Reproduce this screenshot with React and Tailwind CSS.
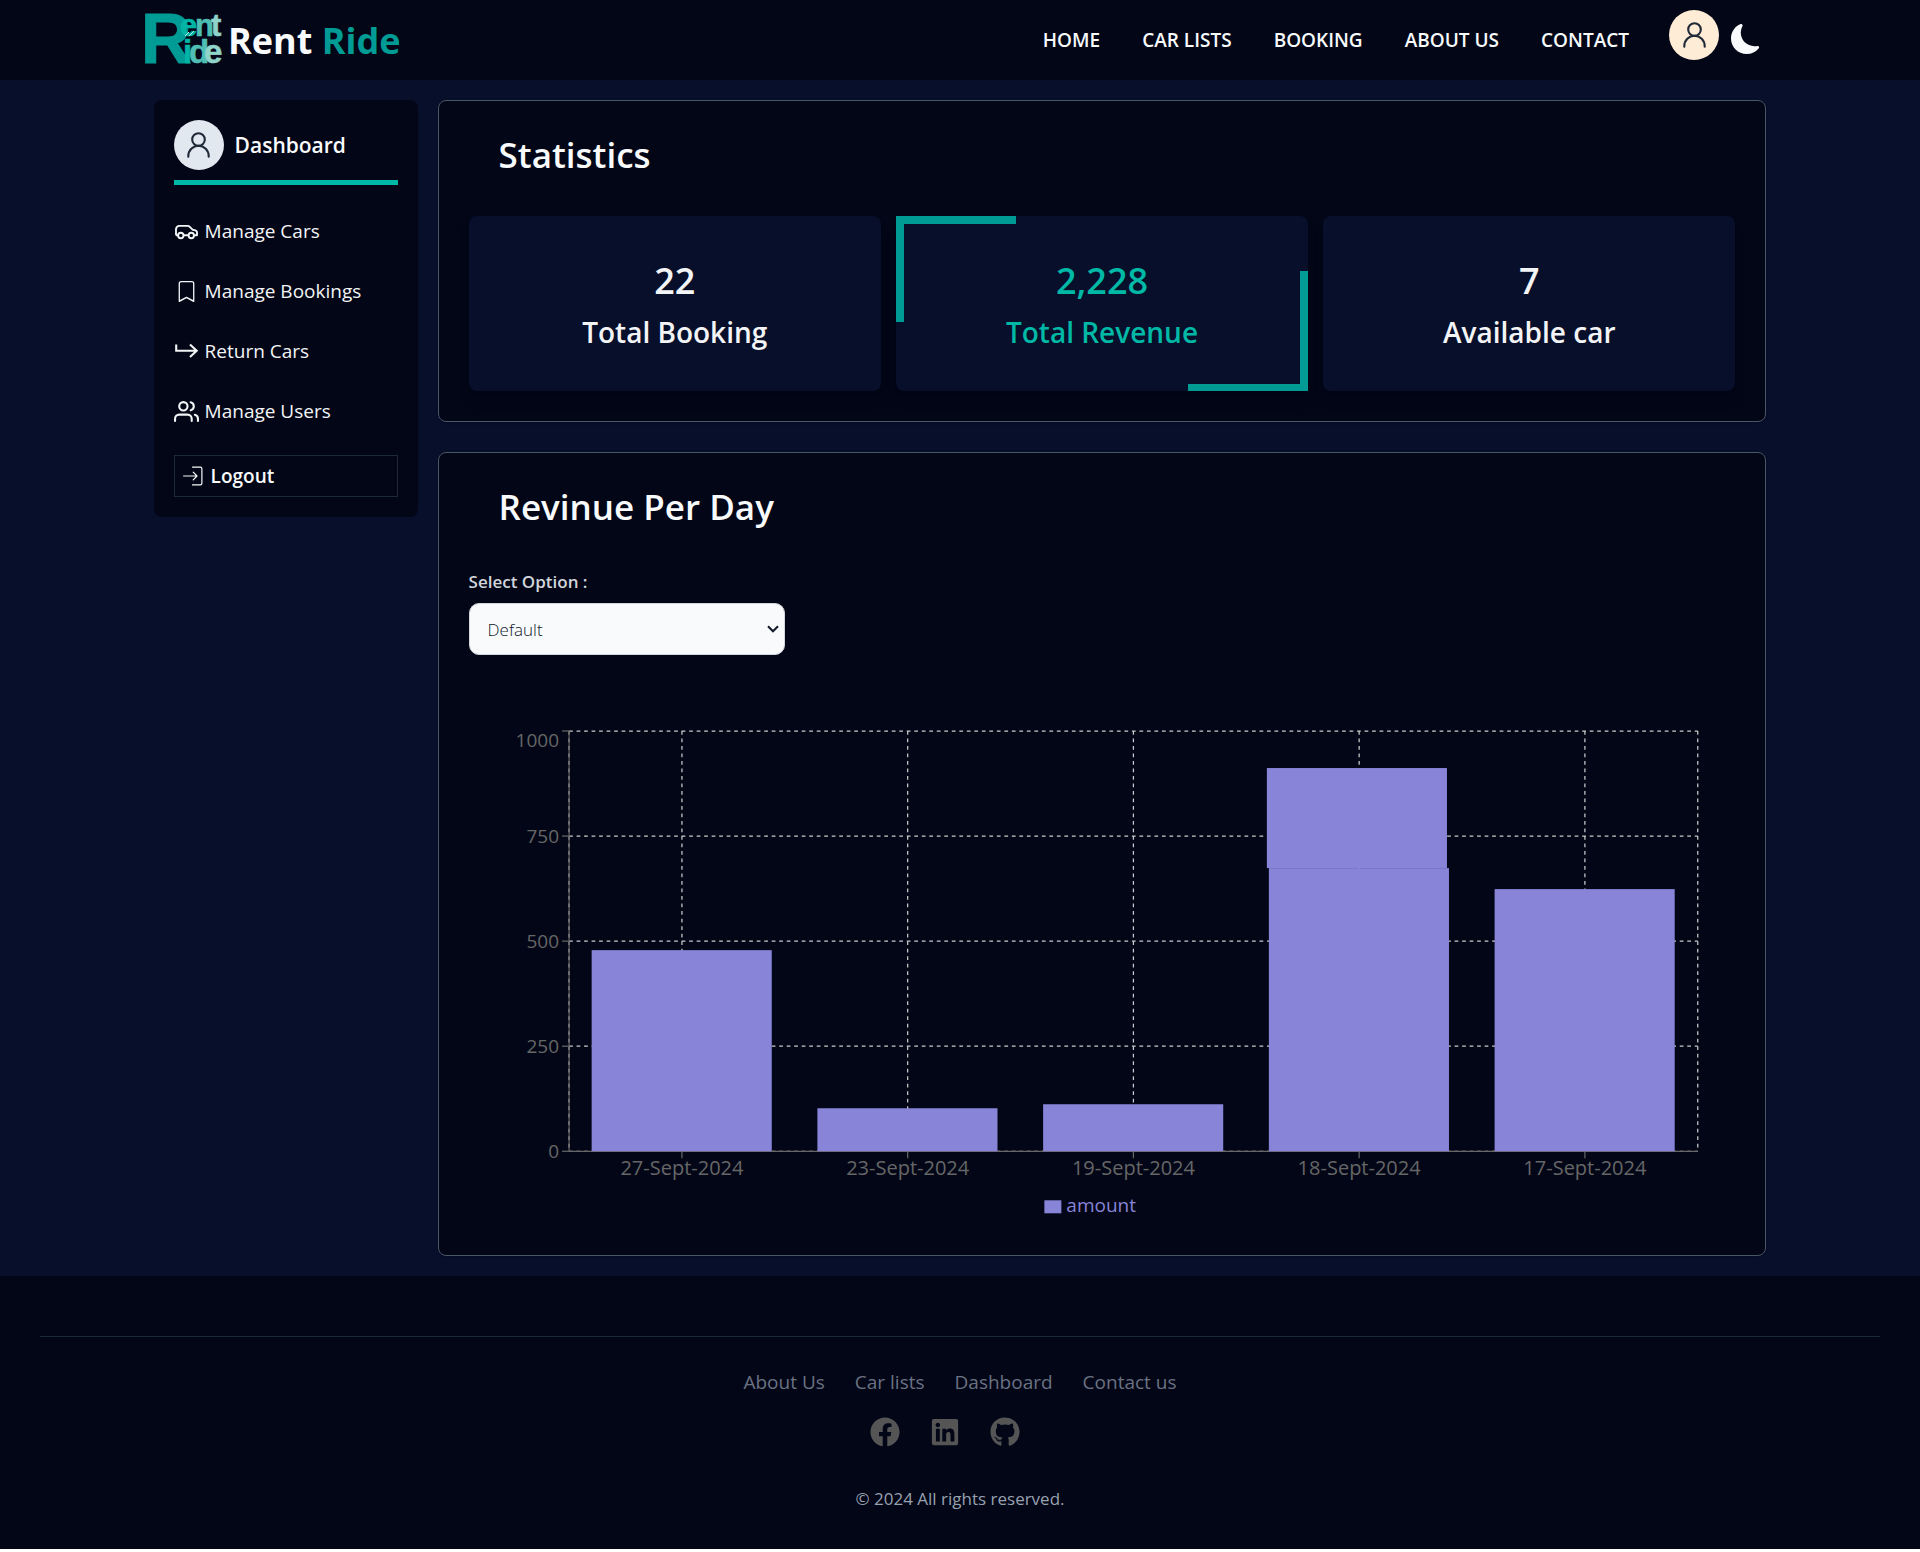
import { BsBookmark, BsMoonFill } from "react-icons/bs";
import { FiUsers } from "react-icons/fi";
import { FaFacebook, FaLinkedin, FaGithub } from "react-icons/fa";

const navItems = ["HOME", "CAR LISTS", "BOOKING", "ABOUT US", "CONTACT"];

function UserIcon() {
  return (
    <svg viewBox="0 0 23 26" className="h-[26px] w-[23px]" fill="none" stroke="currentColor" strokeWidth="2.1" strokeLinecap="round" aria-hidden="true">
      <circle cx="11.5" cy="7.5" r="6.3" />
      <path d="M1.3 24.7v-.5a10.2 10.4 0 0 1 20.4 0v.5" />
    </svg>
  );
}

function CarIcon() {
  return (
    <svg viewBox="0 0 25 25" className="size-[25px]" fill="none" stroke="currentColor" strokeWidth="1.9" strokeLinejoin="round" aria-hidden="true">
      <path d="M4 16.3H2.7L2 15.4V10Q2.6 6.9 5.4 6.9H13.8Q14.8 6.9 15.5 7.6L18.6 10.7Q23 11 23 13.6V16.3H20.2M9.6 16.3H14.4" />
      <circle cx="6.8" cy="16.5" r="2.7" />
      <circle cx="17.3" cy="16.5" r="2.7" />
    </svg>
  );
}

function ReturnIcon() {
  return (
    <svg viewBox="0 0 25 25" className="size-[25px]" fill="none" stroke="currentColor" strokeWidth="2.1" aria-hidden="true">
      <path d="M2.2 5.5V11.7H22.6M16 5.5l6.7 6.2-6.7 6.2" />
    </svg>
  );
}

function LogoutIcon() {
  return (
    <svg viewBox="0 0 20 20" className="size-5" fill="none" stroke="currentColor" strokeWidth="1.2" strokeLinecap="round" strokeLinejoin="round" aria-hidden="true">
      <path d="M9.5 1.1H17.2Q18.9 1.1 18.9 2.8V17.2Q18.9 18.9 17.2 18.9H9.5" />
      <path d="M.6 10H14M10.2 6.2 14 10l-3.8 3.8" />
    </svg>
  );
}

function BookmarkIcon() {
  return <BsBookmark className="size-[21px]" aria-hidden="true" />;
}

function UsersIcon() {
  return <FiUsers className="size-[25px]" aria-hidden="true" />;
}

function Logo() {
  return (
    <svg
      viewBox="0 0 78 52"
      className="h-[52px] w-[78px] shrink-0 overflow-visible"
      fontFamily="'Liberation Sans', Arial, sans-serif"
      fontWeight="bold"
      aria-hidden="true"
    >
      <text x="-3" y="49" fontSize="70" fill="#009b95" stroke="#009b95" strokeWidth="1">R</text>
      <text y="22" fontSize="31" strokeWidth="0.6">
        <tspan x="36" fill="#00b5a5" stroke="#00b5a5">e</tspan>
        <tspan x="51" fill="#4fbfb4" stroke="#4fbfb4">n</tspan>
        <tspan x="67" fill="#8fd3cb" stroke="#8fd3cb">t</tspan>
      </text>
      <text y="49" fontSize="33" strokeWidth="0.6">
        <tspan x="39" fill="#00b5a5" stroke="#00b5a5">i</tspan>
        <tspan x="45" fill="#4fbfb4" stroke="#4fbfb4">d</tspan>
        <tspan x="60" fill="#8fd3cb" stroke="#8fd3cb">e</tspan>
      </text>
      <path d="M41 22l4-4M45 22l5-5" stroke="#b8e4df" strokeWidth="1" fill="none" />
    </svg>
  );
}

function Header() {
  return (
    <header className="bg-[#020617]">
      <div className="mx-auto flex h-20 w-[85%] items-center justify-between pr-[15px]">
        <a href="#home" className="flex items-center gap-[6px]">
          <Logo />
          <span className="pt-[2px] text-[36px] leading-[40px] font-bold text-slate-50">
            Rent <span className="text-[#009b95]">Ride</span>
          </span>
        </a>
        <div className="flex items-center gap-10">
          <nav className="flex gap-[42px] text-[19px] leading-7 font-semibold text-slate-50">
            {navItems.map((n) => (
              <a key={n} href={"#" + n.toLowerCase().replace(" ", "-")}>{n}</a>
            ))}
          </nav>
          <div className="flex items-center gap-3 pb-[2px]">
            <button aria-label="Profile" className="mb-2 flex size-[50px] items-center justify-center rounded-full bg-[#ffecd6] text-[#1f2937]">
              <UserIcon />
            </button>
            <button aria-label="Toggle theme" className="text-slate-50">
              <BsMoonFill className="size-[30px]" />
            </button>
          </div>
        </div>
      </div>
    </header>
  );
}

const menu = [
  { label: "Manage Cars", Icon: CarIcon },
  { label: "Manage Bookings", Icon: BookmarkIcon },
  { label: "Return Cars", Icon: ReturnIcon },
  { label: "Manage Users", Icon: UsersIcon },
];

function Sidebar() {
  return (
    <aside className="w-[264px] shrink-0 rounded-lg bg-[#020617] p-5 text-slate-50">
      <div className="flex items-center gap-[11px] border-b-[5px] border-[#00b8a6] pb-[10px]">
        <span className="flex size-[50px] items-center justify-center rounded-full bg-slate-200 text-[#1f2937]">
          <UserIcon />
        </span>
        <h2 className="text-[21px] leading-8 font-semibold">Dashboard</h2>
      </div>
      <ul className="mt-4 mb-[14px]">
        {menu.map(({ label, Icon }) => (
          <li key={label}>
            <a href={"#" + label.toLowerCase().replace(" ", "-")} className="flex h-[60px] items-center gap-[6px] text-[19px] font-medium text-gray-100">
              <span className="flex w-[25px] justify-center">
                <Icon />
              </span>
              {label}
            </a>
          </li>
        ))}
      </ul>
      <button className="flex h-[42px] w-full items-center gap-2 border border-gray-800 px-2 text-[19px] font-semibold">
        <LogoutIcon />
        Logout
      </button>
    </aside>
  );
}

function Panel({ title, children }) {
  return (
    <section className="rounded-lg border border-gray-600 bg-[#020617] p-[30px] shadow-sm">
      <h2 className="mb-[37px] pl-[30px] text-[35px] leading-[48px] font-semibold text-slate-50">{title}</h2>
      {children}
    </section>
  );
}

function StatCard({ value, label, accent }) {
  return (
    <div
      className={
        "relative rounded-lg bg-[#070f2b] pt-10 pb-[33px] text-center font-semibold shadow-lg " +
        (accent ? "text-[#00b8a6]" : "text-gray-100")
      }
    >
      {accent && (
        <>
          <span className="absolute top-0 left-0 h-[106px] w-[120px] border-t-[8px] border-l-[8px] border-[#009b95]" />
          <span className="absolute right-0 bottom-0 h-[120px] w-[120px] border-r-[8px] border-b-[7px] border-[#009b95]" />
        </>
      )}
      <p className="text-[36px] leading-[50px]">{value}</p>
      <p className="text-[28px] leading-[52px]">{label}</p>
    </div>
  );
}

const data = [
  { date: "27-Sept-2024", parts: [479] },
  { date: "23-Sept-2024", parts: [102] },
  { date: "19-Sept-2024", parts: [112] },
  { date: "18-Sept-2024", parts: [675, 236] },
  { date: "17-Sept-2024", parts: [624] },
];
const plot = { left: 100, right: 1228, top: 20, bottom: 440 };
const step = (plot.right - plot.left) / data.length;
const yOf = (v) => Math.round(plot.bottom - (v / 1000) * (plot.bottom - plot.top));
const centerOf = (i) => plot.left + step * (i + 0.5);
const ticks = [0, 250, 500, 750, 1000];

function RevenueChart() {
  return (
    <svg viewBox="0 0 1266 514" className="mt-14 block w-full" fontSize="20" role="img" aria-label="Revenue per day">
      <g stroke="#ccc" strokeWidth="1.25" strokeDasharray="3.75 3.75" fill="none">
        {ticks.map((t) => (
          <path key={t} d={`M${plot.left} ${yOf(t)}H${plot.right}`} />
        ))}
        {data.map((d, i) => (
          <path key={d.date} d={`M${centerOf(i)} ${plot.top}V${plot.bottom}`} />
        ))}
        <path d={`M${plot.left} ${plot.top}V${plot.bottom}M${plot.right} ${plot.top}V${plot.bottom}`} />
      </g>
      <g stroke="#666" strokeWidth="1.25" fill="none">
        <path d={`M${plot.left} ${plot.top}V${plot.bottom}H${plot.right}`} />
        {ticks.map((t) => (
          <path key={t} d={`M${plot.left - 7} ${yOf(t)}H${plot.left}`} />
        ))}
        {data.map((d, i) => (
          <path key={d.date} d={`M${centerOf(i)} ${plot.bottom}v7`} />
        ))}
      </g>
      <g fill="#8884d8">
        {data.map((d, i) => {
          const x = plot.left + step * (i + 0.1);
          const [base, upper = 0] = d.parts;
          return (
            <g key={d.date}>
              <rect x={x} y={yOf(base)} width="180" height={plot.bottom - yOf(base)} />
              {upper > 0 && <rect x={x - 2} y={yOf(base + upper)} width="180" height={yOf(base) - yOf(base + upper)} />}
            </g>
          );
        })}
      </g>
      <g fill="#666">
        {ticks.map((t) => (
          <text key={t} x="90" y={t === 1000 ? 36 : yOf(t) + 7} fontSize="19" textAnchor="end">{t}</text>
        ))}
        {data.map((d, i) => (
          <text key={d.date} x={centerOf(i)} y="464" textAnchor="middle">{d.date}</text>
        ))}
      </g>
      <rect x="575" y="489" width="17" height="13" fill="#8884d8" />
      <text x="597" y="501" fontSize="19" fill="#8884d8">amount</text>
    </svg>
  );
}

const footerLinks = ["About Us", "Car lists", "Dashboard", "Contact us"];
const socials = [
  { name: "Facebook", Icon: FaFacebook },
  { name: "LinkedIn", Icon: FaLinkedin },
  { name: "GitHub", Icon: FaGithub },
];

function Footer() {
  return (
    <footer className="bg-[#020617] px-10 pt-[60px] pb-9 text-center">
      <div className="border-t border-gray-800 pt-[30px]">
        <nav className="flex justify-center gap-[30px] text-[19px] leading-[30px] text-gray-500">
          {footerLinks.map((l) => (
            <a key={l} href={"#" + l.toLowerCase().replace(" ", "-")}>{l}</a>
          ))}
        </nav>
        <div className="mt-5 flex justify-center gap-[30px] pr-[30px] text-[#555]">
          {socials.map(({ name, Icon }) => (
            <a key={name} href={"#" + name.toLowerCase()} aria-label={name}>
              <Icon className="size-[30px]" />
            </a>
          ))}
        </div>
        <p className="mt-[38px] text-[17px] leading-[28px] text-gray-400">© 2024 All rights reserved.</p>
      </div>
    </footer>
  );
}

export default function App() {
  return (
    <div className="bg-[#070f2b] font-['Open_Sans',sans-serif]">
      <Header />
      <div className="mx-auto flex w-[84%] items-start gap-5 py-5">
        <Sidebar />
        <main className="flex min-w-0 grow flex-col gap-[30px]">
          <Panel title="Statistics">
            <div className="grid grid-cols-3 gap-[15px]">
              <StatCard value="22" label="Total Booking" />
              <StatCard value="2,228" label="Total Revenue" accent />
              <StatCard value="7" label="Available car" />
            </div>
          </Panel>
          <Panel title="Revinue Per Day">
            <label htmlFor="range" className="mb-[7px] block text-[17px] leading-7 font-semibold text-gray-300">
              Select Option :
            </label>
            <div className="relative w-1/4">
              <select id="range" className="block h-[52px] w-full appearance-none rounded-[10px] border border-gray-300 bg-slate-50 pt-px pl-[18px] text-[17px] font-light text-gray-900">
                <option>Default</option>
              </select>
              <svg viewBox="0 0 12 8" className="pointer-events-none absolute top-[22px] right-[6px] h-2 w-3" fill="none" stroke="#111827" strokeWidth="2" aria-hidden="true">
                <path d="M1 1.3l5 5 5-5" />
              </svg>
            </div>
            <RevenueChart />
          </Panel>
        </main>
      </div>
      <Footer />
    </div>
  );
}
